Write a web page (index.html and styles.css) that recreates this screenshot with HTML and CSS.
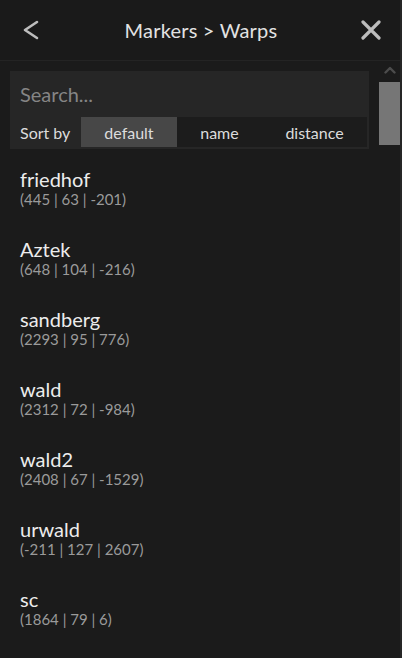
FILE: index.html
```html
<!DOCTYPE html>
<html>
<head>
    <title>Markers > Warps</title>
    <link rel="stylesheet" href="styles.css">
</head>
<body>
    <div class="header">
        <button class="icon-btn" aria-label="Back">
            <svg width="20" height="22" viewBox="0 0 20 22"><path d="M16 3 L4 11 L16 19" fill="none" stroke="#bdbdbd" stroke-width="2.6" stroke-linecap="round" stroke-linejoin="round"/></svg>
        </button>
        <h1>Markers &gt; Warps</h1>
        <button class="icon-btn" aria-label="Close">
            <svg width="20" height="20" viewBox="0 0 20 20"><path d="M2 2 L18 18 M18 2 L2 18" fill="none" stroke="#bdbdbd" stroke-width="3.2" stroke-linecap="round"/></svg>
        </button>
    </div>
    <div class="main">
        <div class="content">
            <div class="panel">
                <input type="text" class="search" placeholder="Search...">
                <div class="sort-row">
                    <span class="sort-label">Sort by</span>
                    <div class="segments">
                        <span class="segment active">default</span>
                        <span class="segment">name</span>
                        <span class="segment">distance</span>
                    </div>
                </div>
            </div>
            <ul class="warps">
                <li><div class="name">friedhof</div><div class="coords">(445 | 63 | -201)</div></li>
                <li><div class="name">Aztek</div><div class="coords">(648 | 104 | -216)</div></li>
                <li><div class="name">sandberg</div><div class="coords">(2293 | 95 | 776)</div></li>
                <li><div class="name">wald</div><div class="coords">(2312 | 72 | -984)</div></li>
                <li><div class="name">wald2</div><div class="coords">(2408 | 67 | -1529)</div></li>
                <li><div class="name">urwald</div><div class="coords">(-211 | 127 | 2607)</div></li>
                <li><div class="name">sc</div><div class="coords">(1864 | 79 | 6)</div></li>
            </ul>
        </div>
        <div class="scrollbar">
            <svg class="arrow" width="12" height="8" viewBox="0 0 12 8"><path d="M1.5 6.5 L6 2 L10.5 6.5" fill="none" stroke="#4c4c4c" stroke-width="2.4" stroke-linecap="round" stroke-linejoin="round"/></svg>
            <div class="thumb"></div>
        </div>
    </div>
</body>
</html>
```

FILE: styles.css
```css
* {
    box-sizing: border-box;
}
body {
    font-family: Lato, "Open Sans", sans-serif;
    background-color: #1b1b1b;
    color: #e6e6e6;
    margin: 0;
    height: 658px;
    overflow: hidden;
    border-right: 2px solid #262626;
}
.header {
    height: 61px;
    display: flex;
    align-items: center;
    justify-content: space-between;
    padding: 0 18px 0 20px;
    background-color: #1a1a1a;
    border-bottom: 1px solid #242424;
}
.header h1 {
    margin: 0;
    font-size: 20px;
    font-weight: normal;
    color: #e2e2e2;
    letter-spacing: 0.2px;
}
.icon-btn {
    background: none;
    border: none;
    padding: 0;
    width: 22px;
    height: 22px;
    display: flex;
    align-items: center;
    justify-content: center;
    cursor: pointer;
}
.main {
    display: flex;
}
.content {
    width: 379px;
    padding: 10px 10px 0 10px;
}
.panel {
    background-color: #262626;
    display: flex;
    flex-direction: column;
    padding-bottom: 2px;
}
.search {
    height: 46px;
    background: transparent;
    border: none;
    outline: none;
    padding: 0 10px;
    font-family: inherit;
    font-size: 20px;
    color: #ddd;
}
.search::placeholder {
    color: #858585;
}
.sort-row {
    display: flex;
    align-items: stretch;
    height: 30px;
    padding-right: 2px;
}
.sort-label {
    width: 71px;
    padding-left: 10px;
    display: flex;
    align-items: center;
    font-size: 16px;
    color: #dcdcdc;
}
.segments {
    flex: 1;
    display: flex;
    background-color: #1c1c1c;
}
.segment {
    flex: 1 1 auto;
    display: flex;
    align-items: center;
    justify-content: center;
    font-size: 16px;
    color: #dcdcdc;
}
.segment.active {
    background-color: #474747;
}
.warps {
    list-style: none;
    margin: 0;
    padding: 0;
}
.warps li {
    height: 70px;
    padding: 19px 10px 0 10px;
}
.name {
    font-size: 20px;
    line-height: 22px;
    color: #ececec;
}
.coords {
    font-size: 15px;
    line-height: 18px;
    color: #9a9a9a;
}
.scrollbar {
    width: 21px;
    display: flex;
    flex-direction: column;
    align-items: center;
}
.arrow {
    margin-top: 5px;
}
.thumb {
    width: 21px;
    height: 63px;
    margin-top: 8px;
    background-color: #767676;
}
```
